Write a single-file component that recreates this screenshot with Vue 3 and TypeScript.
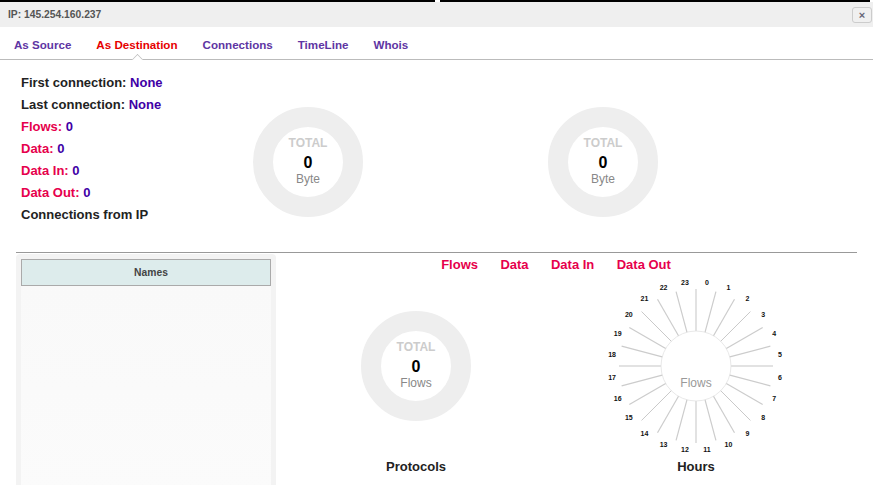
<script setup lang="ts">
interface Row {
  label: string
  value?: string
  hot?: boolean
}

const tabs = ['As Source', 'As Destination', 'Connections', 'TimeLine', 'Whois']
const activeTab = 'As Destination'

const rows: Row[] = [
  { label: 'First connection:', value: 'None' },
  { label: 'Last connection:', value: 'None' },
  { label: 'Flows:', value: '0', hot: true },
  { label: 'Data:', value: '0', hot: true },
  { label: 'Data In:', value: '0', hot: true },
  { label: 'Data Out:', value: '0', hot: true },
  { label: 'Connections from IP' },
]

const metrics = ['Flows', 'Data', 'Data In', 'Data Out']

const CX = 100
const CY = 92

function polar(r: number, deg: number) {
  const a = (deg * Math.PI) / 180
  return { x: CX + r * Math.sin(a), y: CY - r * Math.cos(a) }
}

const spokes = Array.from({ length: 24 }, (_, i) => {
  const deg = i * 15
  const a = polar(35, deg)
  const b = polar(77, deg)
  const kind = deg % 90 === 0 ? 'axis' : deg % 45 === 0 ? 'thin' : 'mid'
  return { i, x1: a.x, y1: a.y, x2: b.x, y2: b.y, kind }
})

const hourLabels = Array.from({ length: 24 }, (_, i) => {
  const p = polar(84.7, i * 15 + 7.5)
  return { i, x: p.x, y: p.y }
})
</script>

<template>
  <div class="page">
    <div class="topbar">
      <span class="seg-a"></span>
      <span class="seg-b"></span>
    </div>
    <header class="title">
      <span>IP: 145.254.160.237</span>
      <button class="close">×</button>
    </header>
    <nav class="tabs">
      <a v-for="t in tabs" :key="t" class="tab" :class="{ active: t === activeTab }">{{ t }}</a>
    </nav>

    <section class="summary">
      <div class="info">
        <div v-for="r in rows" :key="r.label" class="row" :class="{ hot: r.hot }">
          {{ r.label }} <span v-if="r.value" class="val">{{ r.value }}</span>
        </div>
      </div>
      <div class="donut">
        <span class="total">TOTAL</span>
        <span class="num">0</span>
        <span class="unit">Byte</span>
      </div>
      <div class="donut second">
        <span class="total">TOTAL</span>
        <span class="num">0</span>
        <span class="unit">Byte</span>
      </div>
    </section>

    <section class="lower">
      <aside class="names">
        <div class="names-head">Names</div>
        <div class="names-body"></div>
      </aside>
      <div class="charts">
        <div class="legend">
          <span v-for="m in metrics" :key="m">{{ m }}</span>
        </div>
        <div class="chart-cols">
          <div class="col">
            <div class="chart-box">
              <div class="donut">
                <span class="total">TOTAL</span>
                <span class="num">0</span>
                <span class="unit">Flows</span>
              </div>
            </div>
            <div class="col-title">Protocols</div>
          </div>
          <div class="col">
            <svg class="hours" width="200" height="184" viewBox="0 0 200 184">
              <circle :cx="CX" :cy="CY" r="35" fill="none" stroke="#e9e9e9" stroke-width="1" />
              <line
                v-for="s in spokes"
                :key="s.i"
                :class="s.kind"
                :x1="s.x1"
                :y1="s.y1"
                :x2="s.x2"
                :y2="s.y2"
              />
              <text
                v-for="l in hourLabels"
                :key="l.i"
                class="hour"
                :x="l.x"
                :y="l.y"
                text-anchor="middle"
                dominant-baseline="central"
              >{{ l.i }}</text>
              <text class="center" :x="CX" :y="CY + 17" text-anchor="middle" dominant-baseline="central">Flows</text>
            </svg>
            <div class="col-title">Hours</div>
          </div>
        </div>
      </div>
    </section>
  </div>
</template>

<style scoped>
.page {
  width: 873px;
  height: 485px;
  overflow: hidden;
  background: #fff;
  font-family: "Liberation Sans", Arial, sans-serif;
  color: #222;
}
.topbar { height: 2px; display: flex; }
.seg-a { width: 435px; background: #000; }
.seg-b { width: 430px; margin-left: 5px; background: #000; }
.title {
  height: 25px;
  box-sizing: border-box;
  padding: 0 1px 0 8px;
  background: #efefef;
  display: flex;
  align-items: center;
  justify-content: space-between;
  font-size: 10.3px;
  font-weight: bold;
  color: #555;
}
.close {
  width: 20px;
  height: 16px;
  padding: 0;
  border: 1px solid #ccc;
  border-radius: 3px;
  background: #f0f0f0;
  color: #667;
  font: bold 11px/12px "Liberation Sans", Arial, sans-serif;
}
.tabs {
  height: 33px;
  box-sizing: border-box;
  padding-left: 1.5px;
  border-bottom: 1px solid #bbb;
  display: flex;
  align-items: center;
}
.tab {
  position: relative;
  padding: 3px 12.5px 0;
  font-size: 11.6px;
  font-weight: bold;
  color: #5e35a3;
}
.tab.active { color: #e60000; }
.tab.active::after {
  content: "";
  position: absolute;
  left: 50%;
  bottom: -13.5px;
  width: 10px;
  height: 10px;
  margin-left: -5px;
  background: #fff;
  border-left: 1px solid #bbb;
  border-top: 1px solid #bbb;
  transform: rotate(45deg) scale(0.7);
}
.summary {
  height: 192px;
  box-sizing: border-box;
  padding: 12px 0 0 21px;
  display: flex;
  align-items: flex-start;
}
.info { width: 232px; flex: none; }
.row {
  height: 22px;
  line-height: 22px;
  font-size: 13px;
  font-weight: bold;
  white-space: nowrap;
}
.row.hot { color: #e6004c; }
.val { color: #3f00a6; }
.donut {
  flex: none;
  width: 110px;
  height: 110px;
  box-sizing: border-box;
  margin-top: 35px;
  border: 20px solid #eee;
  border-radius: 50%;
  display: flex;
  flex-direction: column;
  align-items: center;
  padding-top: 9px;
  background: #fff;
}
.donut.second { margin-left: 185px; }
.total { font-size: 12px; line-height: 14px; font-weight: bold; color: #ccc; }
.num { font-size: 16px; line-height: 20px; margin-top: 3px; font-weight: bold; color: #000; }
.unit { font-size: 12px; line-height: 13px; color: #888; }
.lower {
  margin: 0 16px;
  border-top: 1px solid #999;
  padding-top: 1px;
  display: flex;
  height: 240px;
}
.names {
  width: 260px;
  flex: none;
  box-sizing: border-box;
  padding: 5px 5px 0;
  background: #f3f3f3;
  border-radius: 4px 4px 0 0;
  display: flex;
  flex-direction: column;
}
.names-head {
  height: 27px;
  box-sizing: border-box;
  border: 1px solid #aaa;
  padding-left: 10px;
  background: #ddecec;
  text-align: center;
  font-size: 10.3px;
  font-weight: bold;
  line-height: 25px;
  color: #444;
}
.names-body { flex: 1; background: linear-gradient(#f9f9f9, #fbfbfb); }
.charts { width: 560px; flex: none; }
.legend {
  height: 20px;
  display: flex;
  justify-content: center;
  gap: 22.4px;
  font-size: 13px;
  font-weight: bold;
  line-height: 21px;
  color: #e6004c;
}
.chart-cols { display: flex; }
.col { width: 280px; display: flex; flex-direction: column; align-items: center; }
.chart-box { height: 184px; padding-top: 2px; box-sizing: border-box; }
.col-title { height: 18px; line-height: 18px; font-size: 13px; font-weight: bold; color: #222; }
.hours { display: block; }
.hours line { stroke: #ccc; stroke-width: 1.2; }
.hours line.axis { stroke: #e2e2e2; stroke-width: 2; }
.hours line.thin { stroke: #bbb; stroke-width: 0.8; }
.hour { font-size: 7px; font-weight: bold; fill: #111; }
.center { font-size: 12px; fill: #999; }
</style>
